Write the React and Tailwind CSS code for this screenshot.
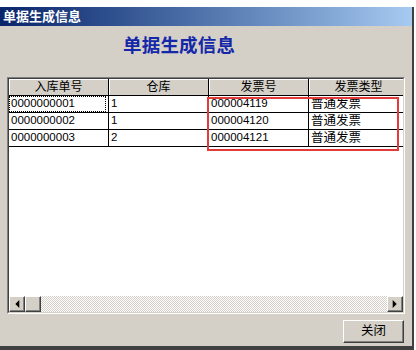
import React from "react";

const rows = [
  ["0000000001", "1", "000004119", "普通发票"],
  ["0000000002", "1", "000004120", "普通发票"],
  ["0000000003", "2", "000004121", "普通发票"],
];

const headers = ["入库单号", "仓库", "发票号", "发票类型"];

const font = { fontFamily: '"Liberation Sans", "Noto Sans CJK SC", sans-serif' };

function Arrow({ dir }) {
  return (
    <div className="w-[16px] h-[16px] bg-[#d4d0c8] border border-t-white border-l-white border-r-[#404040] border-b-[#404040] shadow-[inset_-1px_-1px_0_#808080] flex items-center justify-center">
      <svg width="6" height="8" viewBox="0 0 4 7">
        {dir === "left" ? (
          <polygon points="4,0 4,7 0.5,3.5" fill="#000" />
        ) : (
          <polygon points="0,0 0,7 3.5,3.5" fill="#000" />
        )}
      </svg>
    </div>
  );
}

export default function App() {
  return (
    <div className="w-[416px] h-[350px] bg-white overflow-hidden" style={font}>
      <div className="mt-[7px] w-[414px] h-[343px] bg-[#d4d0c8] border-r-2 border-b-4 border-[#404040] flex flex-col">
        <div className="h-[19px] bg-gradient-to-r from-[#0a246a] to-[#a6caf0] flex items-center pl-[3px]">
          <span className="text-white font-bold text-[13px] leading-none">单据生成信息</span>
        </div>

        <div className="mt-[9px] h-[22px] pl-[123px] flex items-center">
          <span className="text-[#1428a8] font-bold text-[18.5px] leading-none tracking-[0.2px]">单据生成信息</span>
        </div>

        <div className="mt-[20px] ml-[7px] w-[398px] h-[237px] border border-t-[#808080] border-l-[#808080] border-r-white border-b-white">
          <div className="w-full h-full border border-t-[#404040] border-l-[#404040] border-r-[#d4d0c8] border-b-[#d4d0c8] flex flex-col">
            <div className="flex-1 bg-white overflow-hidden relative">
              <div className="w-[400px]">
                <div className="grid grid-cols-[100px_100px_100px_100px] h-[17px] bg-[#d4d0c8]">
                  {headers.map((h) => (
                    <div
                      key={h}
                      className="border-r border-b border-black shadow-[inset_1px_1px_0_#fff] flex items-center justify-center text-[12px] leading-none text-black"
                    >
                      {h}
                    </div>
                  ))}
                </div>
                {rows.map((r, i) => (
                  <div key={i} className="grid grid-cols-[100px_100px_100px_100px] h-[17px]">
                    {r.map((c, j) => (
                      <div
                        key={j}
                        className={`border-r border-b border-black flex items-center pl-[2px] leading-none text-black ${j === 3 ? "text-[12.5px]" : "text-[11.5px]"}`}
                      >
                        {i === 0 && j === 0 ? (
                          <span className="h-full w-full flex items-center outline-1 outline-dotted outline-black -outline-offset-1 -ml-[2px] pl-[2px]">
                            {c}
                          </span>
                        ) : (
                          c
                        )}
                      </div>
                    ))}
                  </div>
                ))}
              </div>
              <div className="absolute left-[198px] top-[18px] w-[192px] h-[54px] border-[2.5px] border-[#e23b3b]" />
            </div>
            <div className="h-[16px] flex bg-[repeating-conic-gradient(#d4d0c8_0_25%,#ffffff_0_50%)] bg-[length:2px_2px]">
              <Arrow dir="left" />
              <div className="w-[16px] h-[16px] bg-[#d4d0c8] border border-t-white border-l-white border-r-[#404040] border-b-[#404040] shadow-[inset_-1px_-1px_0_#808080]" />
              <div className="flex-1" />
              <Arrow dir="right" />
            </div>
          </div>
        </div>

        <div className="mt-[6px] flex justify-end pr-[8px]">
          <button className="w-[61px] h-[23px] bg-[#d4d0c8] border border-t-white border-l-white border-r-[#404040] border-b-[#404040] shadow-[inset_-1px_-1px_0_#808080] text-[12.5px] text-black leading-none flex items-center justify-center">
            关闭
          </button>
        </div>
      </div>
    </div>
  );
}
